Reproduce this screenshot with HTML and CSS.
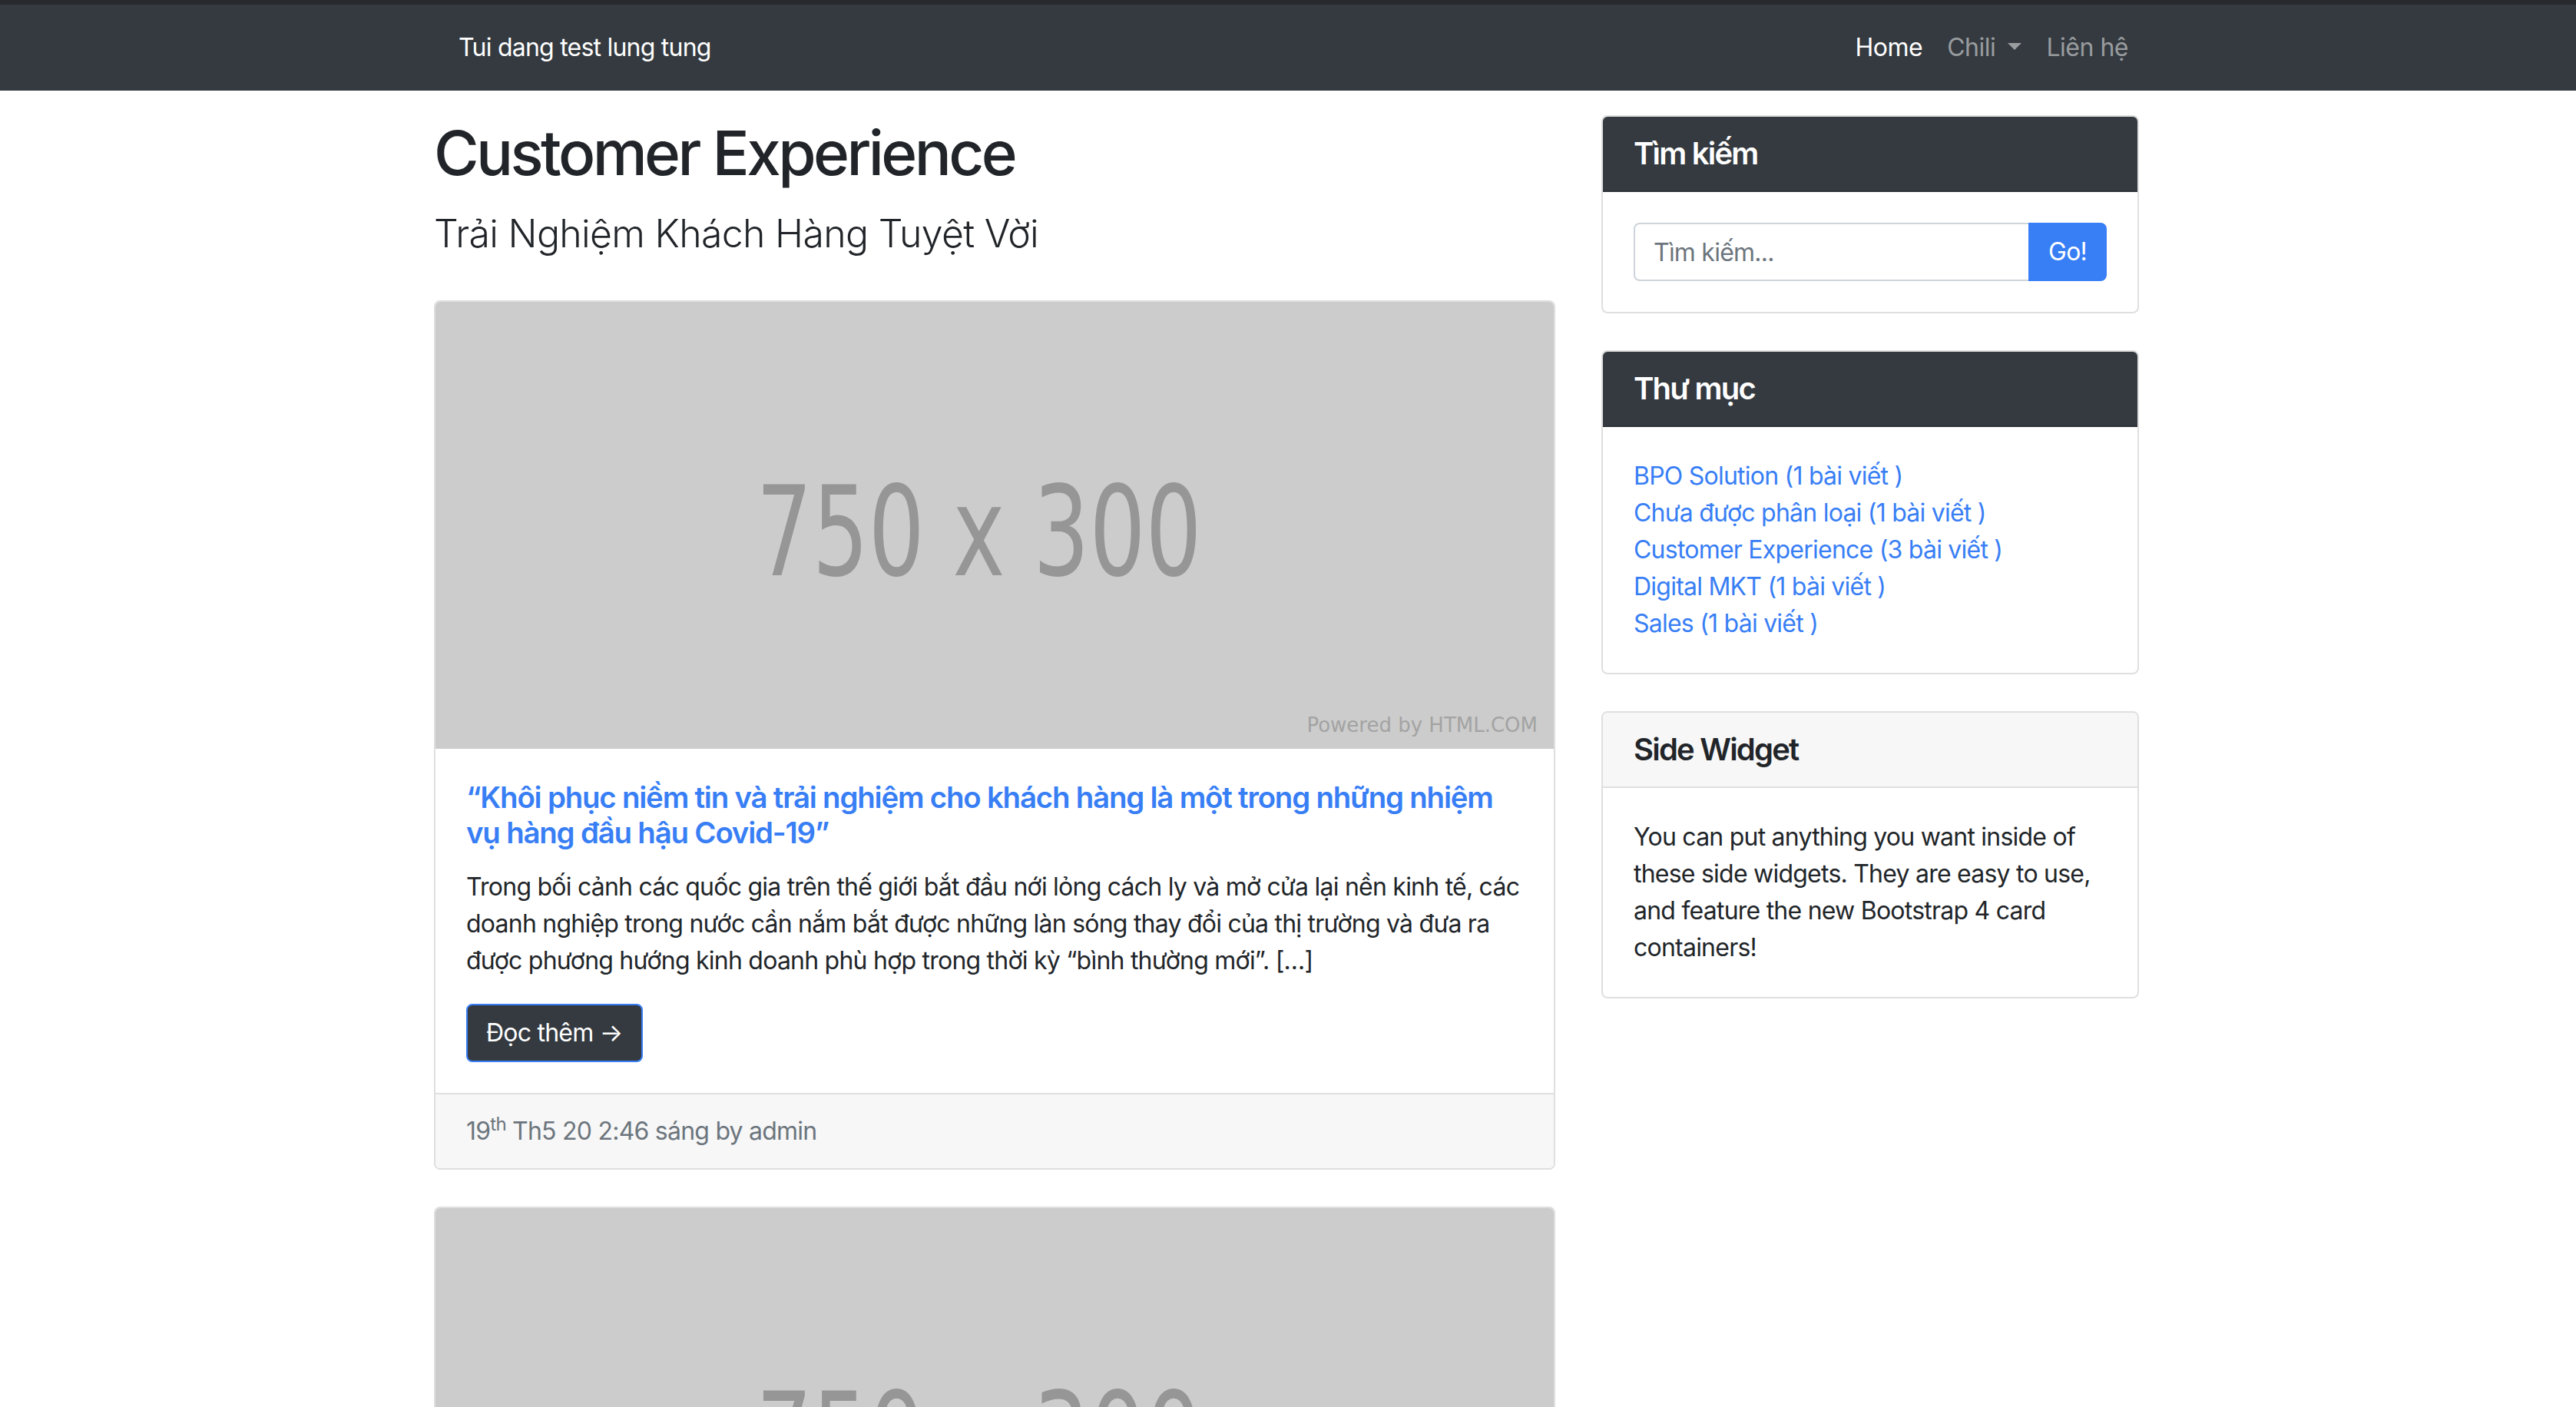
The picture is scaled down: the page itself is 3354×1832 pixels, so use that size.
FILE: index.html
```html
<!DOCTYPE html>
<html lang="vi">
<head>
<meta charset="utf-8">
<title>Tui dang test lung tung</title>
<link rel="stylesheet" href="styles.css">
</head>
<body>
<nav class="navbar">
  <div class="nav-inner">
    <a class="brand" href="#">Tui dang test lung tung</a>
    <ul class="nav-links">
      <li><a class="nav-link active" href="#">Home</a></li>
      <li><a class="nav-link" href="#">Chili<span class="caret"></span></a></li>
      <li><a class="nav-link" href="#">Liên hệ</a></li>
    </ul>
  </div>
</nav>

<div class="container">
  <main class="main-col">
    <h1 class="page-title">Customer Experience</h1>
    <h2 class="page-sub">Trải Nghiệm Khách Hàng Tuyệt Vời</h2>

    <article class="card">
      <div class="placeholder">
        <span class="ph-size">750 x 300</span>
        <span class="ph-credit">Powered by HTML.COM</span>
      </div>
      <div class="card-body">
        <h2 class="post-title"><a href="#">“Khôi phục niềm tin và trải nghiệm cho khách hàng là một trong những nhiệm<br>vụ hàng đầu hậu Covid-19”</a></h2>
        <p class="post-text">Trong bối cảnh các quốc gia trên thế giới bắt đầu nới lỏng cách ly và mở cửa lại nền kinh tế, các<br>doanh nghiệp trong nước cần nắm bắt được những làn sóng thay đổi của thị trường và đưa ra<br>được phương hướng kinh doanh phù hợp trong thời kỳ “bình thường mới”. [&hellip;]</p>
        <a class="btn-read" href="#">Đọc thêm →</a>
      </div>
      <div class="card-footer">19<sup>th</sup> Th5 20 2:46 sáng by admin</div>
    </article>

    <article class="card">
      <div class="placeholder">
        <span class="ph-size">750 x 300</span>
        <span class="ph-credit">Powered by HTML.COM</span>
      </div>
    </article>
  </main>

  <aside class="side-col">
    <section class="card side-card">
      <div class="card-header dark"><h5 class="card-title">Tìm kiếm</h5></div>
      <div class="card-body">
        <form class="input-group">
          <input class="search-input" type="text" placeholder="Tìm kiếm...">
          <button class="btn-go" type="button">Go!</button>
        </form>
      </div>
    </section>

    <section class="card side-card">
      <div class="card-header dark"><h5 class="card-title">Thư mục</h5></div>
      <div class="card-body">
        <ul class="cat-list">
          <li><a href="#">BPO Solution (1 bài viết )</a></li>
          <li><a href="#">Chưa được phân loại (1 bài viết )</a></li>
          <li><a href="#">Customer Experience (3 bài viết )</a></li>
          <li><a href="#">Digital MKT (1 bài viết )</a></li>
          <li><a href="#">Sales (1 bài viết )</a></li>
        </ul>
      </div>
    </section>

    <section class="card side-card">
      <div class="card-header"><h5 class="card-title">Side Widget</h5></div>
      <div class="card-body">
        You can put anything you want inside of these side widgets. They are easy to use, and feature the new Bootstrap 4 card containers!
      </div>
    </section>
  </aside>
</div>
</body>
</html>
```

FILE: styles.css
```css
* {
  box-sizing: border-box;
}

html {
  font-size: 32px;
}

body {
  margin: 0;
  font-family: Inter, "Noto Sans", sans-serif;
  font-size: 32px;
  line-height: 1.5;
  letter-spacing: -0.024em;
  color: #212529;
  background: #fff;
}

a {
  color: #387ef5;
  text-decoration: none;
}

/* Navbar */
.navbar {
  background: #343a40;
  border-top: 6px solid #27292c;
}

.nav-inner {
  width: 2280px;
  height: 112px;
  margin: 0 auto;
  padding: 0 30px 0 60px;
  display: flex;
  align-items: center;
  justify-content: space-between;
}

.brand {
  color: #fff;
  line-height: 48px;
}

.nav-links {
  list-style: none;
  margin: 0;
  padding: 0;
  display: flex;
  letter-spacing: -0.015em;
}

.nav-link {
  display: block;
  padding: 0 16px;
  line-height: 48px;
  color: rgba(255, 255, 255, 0.5);
}

.nav-link.active {
  color: #fff;
}

.caret {
  display: inline-block;
  width: 0;
  height: 0;
  margin-left: 16px;
  vertical-align: 0.255em;
  border-top: 0.3em solid;
  border-left: 0.3em solid transparent;
  border-right: 0.3em solid transparent;
}

/* Layout */
.container {
  width: 2284px;
  margin: 0 auto;
  padding: 0 34px 0 30px;
  display: grid;
  grid-template-columns: 1460px 700px;
  column-gap: 60px;
  align-items: start;
}

.main-col {
  padding-top: 33px;
}

.side-col {
  padding-top: 32px;
}

.page-title {
  margin: 0;
  font-size: 80px;
  line-height: 96px;
  font-weight: 500;
  letter-spacing: -0.045em;
}

.page-sub {
  margin: 27px 0 57px;
  font-size: 50px;
  line-height: 60px;
  font-weight: 300;
  letter-spacing: -0.014em;
}

/* Cards */
.card {
  background: #fff;
  border: 2px solid #dfdfdf;
  border-radius: 8px;
  overflow: hidden;
  margin-bottom: 48px;
}

.card-body {
  padding: 40px;
}

.placeholder {
  position: relative;
  height: 582px;
  background: #cccccc;
  display: flex;
  align-items: center;
  justify-content: center;
  padding: 18px 40px 0 0;
  letter-spacing: 0;
}

.ph-size {
  font-family: "DejaVu Sans", sans-serif;
  font-size: 162px;
  line-height: 1;
  color: #969696;
  transform: scaleX(0.71);
  white-space: nowrap;
}

.ph-credit {
  position: absolute;
  right: 21px;
  bottom: 18px;
  font-family: "DejaVu Sans", sans-serif;
  font-size: 26px;
  line-height: 1;
  color: #a3a3a3;
}

.post-title {
  margin: 0 0 24px;
  font-size: 38.4px;
  line-height: 46px;
  font-weight: 600;
  letter-spacing: -0.031em;
  white-space: nowrap;
}

.post-text {
  margin: 0 0 32px;
  white-space: nowrap;
}

.btn-read {
  display: inline-block;
  padding: 12px 24px;
  line-height: 48px;
  color: #fff;
  background: #343a40;
  border: 2px solid #387ef5;
  border-radius: 8px;
}

.card-footer {
  padding: 24px 40px;
  background: #f7f7f7;
  border-top: 2px solid #dfdfdf;
  color: #6c757d;
}

sup {
  position: relative;
  top: -0.5em;
  font-size: 75%;
  line-height: 0;
  vertical-align: baseline;
}

/* Sidebar */
.card-header {
  padding: 24px 40px;
  background: #f7f7f7;
  border-bottom: 2px solid #dfdfdf;
}

.card-header.dark {
  background: #343a40;
  color: #fff;
  border-bottom-color: #2d3237;
}

.card-title {
  margin: 0;
  font-size: 40px;
  line-height: 48px;
  font-weight: 600;
  letter-spacing: -0.045em;
}

.input-group {
  display: flex;
  margin: 0;
}

.search-input {
  flex: 1;
  min-width: 0;
  height: 76px;
  padding: 12px 24px;
  font: inherit;
  letter-spacing: inherit;
  color: #495057;
  border: 2px solid #ced4da;
  border-right: 0;
  border-radius: 8px 0 0 8px;
  outline: none;
}

.search-input::placeholder {
  color: #6c757d;
}

.btn-go {
  height: 76px;
  padding: 12px 24px;
  font: inherit;
  letter-spacing: inherit;
  line-height: 48px;
  color: #fff;
  background: #387ef5;
  border: 2px solid #387ef5;
  border-radius: 0 8px 8px 0;
}

.cat-list {
  list-style: none;
  margin: 0;
  padding: 0;
}
```
